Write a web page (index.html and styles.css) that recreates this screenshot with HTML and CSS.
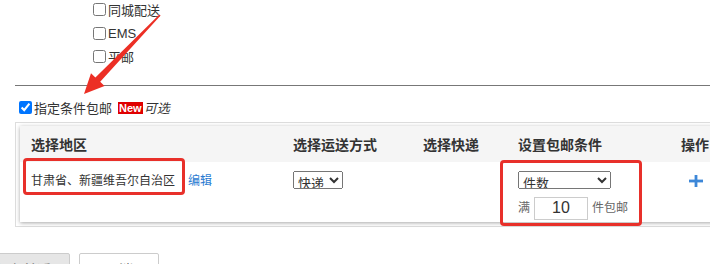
FILE: index.html
```html
<!DOCTYPE html>
<html>

<head>
  <title>运费模板 - 指定条件包邮</title>
  <meta charset="utf-8">
  <link rel="stylesheet" href="styles.css">
</head>

<body>
  <div class="page">
    <!-- 运送方式 -->
    <div class="ship-list">
      <label class="opt"><input type="checkbox">同城配送</label>
      <label class="opt"><input type="checkbox">EMS</label>
      <label class="opt"><input type="checkbox">平邮</label>
    </div>

    <div class="divider"></div>

    <!-- 指定条件包邮 -->
    <label class="free-toggle">
      <input type="checkbox" checked>指定条件包邮
      <span class="badge-new">New</span><em class="optional">可选</em>
    </label>

    <div class="rule-box">
      <div class="rule-inner">
        <table class="rule-table">
          <colgroup>
            <col style="width:262px">
            <col style="width:130px">
            <col style="width:95px">
            <col style="width:163px">
            <col style="width:90px">
          </colgroup>
          <thead>
            <tr>
              <th>选择地区</th>
              <th>选择运送方式</th>
              <th>选择快递</th>
              <th>设置包邮条件</th>
              <th>操作</th>
            </tr>
          </thead>
          <tbody>
            <tr class="rule-row">
              <td>
                <span class="area">甘肃省、新疆维吾尔自治区</span><a class="edit" href="#">编辑</a>
              </td>
              <td>
                <select class="sel-ship">
                  <option>快递</option>
                  <option>EMS</option>
                  <option>平邮</option>
                </select>
              </td>
              <td></td>
              <td>
                <select class="sel-cond">
                  <option>件数</option>
                  <option>金额</option>
                  <option>件数+金额</option>
                </select>
                <div class="cond-line">
                  <span>满</span>
                  <input type="text" class="cond-num" value="10">
                  <span>件包邮</span>
                </div>
              </td>
              <td>
                <a class="add" href="#">
                  <svg width="14" height="12" viewBox="0 0 14 12">
                    <rect x="0" y="4.6" width="14" height="2.8" fill="#3d87d8" />
                    <rect x="5.6" y="0" width="2.8" height="12" fill="#3d87d8" />
                  </svg>
                </a>
              </td>
            </tr>
          </tbody>
        </table>
      </div>
    </div>

    <div class="actions">
      <button class="btn btn-save">保存并返回</button>
      <button class="btn btn-cancel">取消</button>
    </div>

    <!-- 标注层 -->
    <div class="marks">
      <svg class="arrow" width="200" height="110" viewBox="0 0 200 110">
        <polygon points="84,96 104.5,88 100.2,83.8 160.6,17.6 159.4,16.4 95.4,79.4 91,75.2" fill="#ec2f25" />
      </svg>
      <div class="mark-box mark-area"></div>
      <div class="mark-box mark-cond"></div>
    </div>
  </div>
</body>

</html>
```

FILE: styles.css
```css
body {
  margin: 0;
  font-family: "Liberation Sans", "Noto Sans CJK SC", sans-serif;
  font-size: 13px;
  color: #333;
  overflow: hidden;
  background: #fff;
}

.page {
  position: relative;
  width: 780px;
  height: 266px;
}

.ship-list {
  margin-left: 89px;
  margin-top: -2px;
}

.opt {
  display: flex;
  align-items: center;
  height: 23.5px;
}

.opt input,
.free-toggle input {
  width: 13px;
  height: 13px;
  margin: 0 2px 0 4px;
}

.divider {
  margin: 16px 0 0 15px;
  border-top: 1px solid #777;
}

.free-toggle {
  display: flex;
  align-items: center;
  height: 20px;
  margin: 12px 0 0 15px;
}

.badge-new {
  background: #e00000;
  color: #fff;
  font-size: 11px;
  font-weight: bold;
  line-height: 12px;
  padding: 0 1px;
  margin-left: 6px;
}

.optional {
  font-style: italic;
  margin-left: 1px;
}

.rule-box {
  margin: 4px 0 0 15px;
  border: 1px solid #ddd;
  border-right: none;
  padding: 3px 0 4px 4px;
}

.rule-inner {
  background: #fff;
  box-shadow: 0 1px 4px rgba(0, 0, 0, 0.35);
}

.rule-table {
  border-collapse: collapse;
  table-layout: fixed;
  width: 740px;
}

.rule-table th {
  height: 36px;
  padding: 0 11px;
  background: #f5f5f5;
  text-align: left;
  font-size: 14px;
  font-weight: bold;
  color: #333;
  font-family: "Noto Sans CJK SC", sans-serif;
}

.rule-row {
  height: 60px;
}

.rule-table td {
  vertical-align: top;
  padding: 9px 11px 0;
  line-height: 18px;
  font-size: 12px;
  white-space: nowrap;
}

.area {
  font-family: "Noto Sans CJK SC", sans-serif;
  color: #333;
}

.edit {
  margin-left: 13px;
  font-size: 12px;
  color: #2a7bd1;
  text-decoration: none;
}

select {
  font-family: "Noto Sans CJK SC", sans-serif;
  font-size: 13px;
  color: #333;
  height: 18px;
  padding: 0;
  margin: 0;
}

.sel-ship {
  width: 50px;
}

.sel-cond {
  width: 93px;
}

.cond-line {
  display: flex;
  align-items: center;
  margin-top: 4px;
  color: #666;
  font-size: 12px;
}

.cond-num {
  width: 54px;
  height: 23px;
  box-sizing: border-box;
  margin: 0 4px 0 4px;
  border: 1px solid #ccc;
  text-align: center;
  font-family: "Liberation Sans", sans-serif;
  font-size: 16px;
  color: #333;
  padding: 0;
}

.add {
  display: inline-block;
  margin: 4px 0 0 8px;
  line-height: 0;
}

.actions {
  display: flex;
  gap: 9px;
  margin-top: 26px;
}

.btn {
  height: 32px;
  font-family: "Noto Sans CJK SC", sans-serif;
  font-size: 14px;
  border: 1px solid #ccc;
  border-radius: 2px;
  padding: 0;
}

.btn-save {
  width: 80px;
  margin-left: -10px;
  background: #e6e6e6;
  color: #777;
}

.btn-cancel {
  width: 80px;
  background: #fff;
  color: #666;
}

.marks {
  position: absolute;
  left: 0;
  top: 0;
  width: 100%;
  height: 100%;
  pointer-events: none;
}

.arrow {
  position: absolute;
  left: 0;
  top: 0;
}

.mark-box {
  position: absolute;
  border: 3px solid #e8302a;
  border-radius: 4px;
  box-sizing: border-box;
}

.mark-area {
  left: 23px;
  top: 160px;
  width: 162px;
  height: 37px;
}

.mark-cond {
  left: 500px;
  top: 162px;
  width: 142px;
  height: 66px;
}
```
